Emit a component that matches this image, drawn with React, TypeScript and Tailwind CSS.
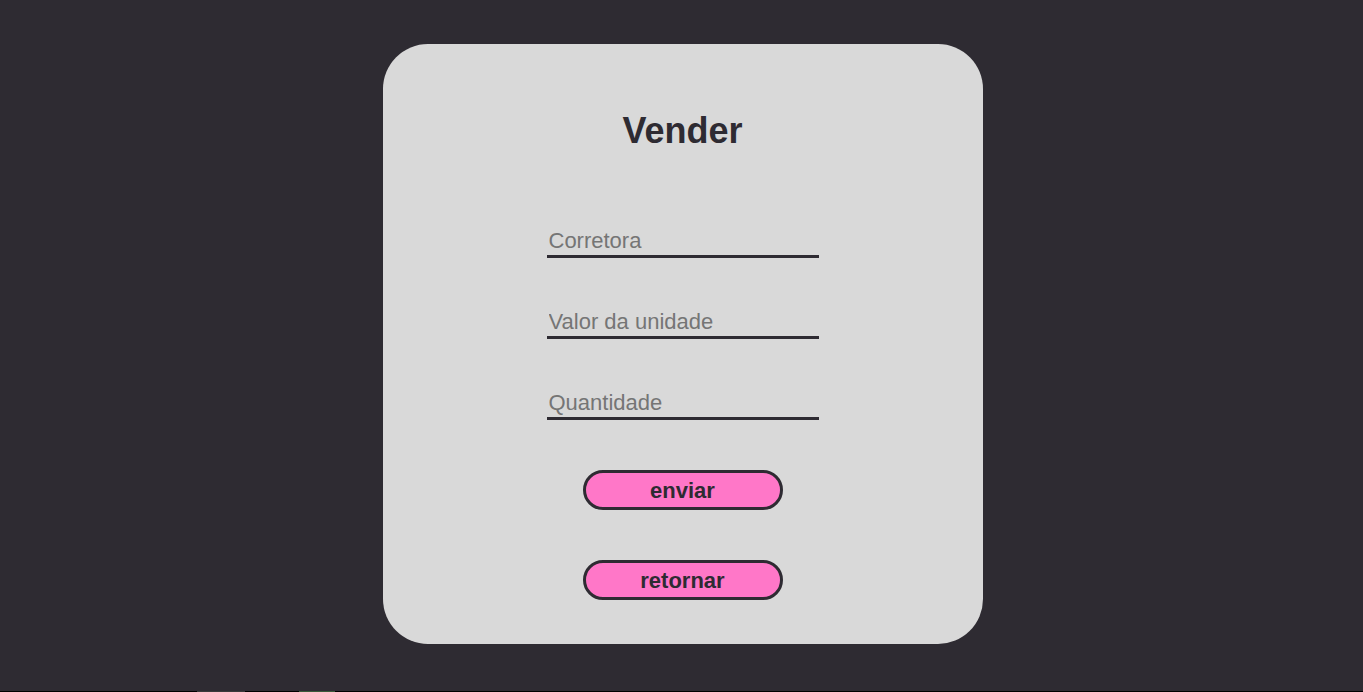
export default function App() {
  const fields = ["Corretora", "Valor da unidade", "Quantidade"];

  return (
    <div className="h-[692px] flex flex-col bg-[#2e2b32] font-['Liberation_Sans',Arial,sans-serif] text-[#2e2b32]">
      <main className="flex-1 flex justify-center pt-[44px] pl-[2px]">
        <form className="w-[600px] h-[600px] bg-[#d9d9d9] rounded-[45px] flex flex-col items-center pt-[66px]">
          <h1 className="text-[36px] leading-[42px] font-bold">Vender</h1>

          <div className="mt-[77px] flex flex-col gap-[52px]">
            {fields.map((f) => (
              <input
                key={f}
                placeholder={f}
                className="w-[272px] h-[29px] bg-transparent border-b-[3px] border-[#2e2b32] px-[2px] pb-[2px] text-[22px] leading-[24px] outline-none placeholder:text-[#757575]"
              />
            ))}
          </div>

          <div className="mt-[50px] flex flex-col gap-[50px]">
            <button type="button" className="w-[200px] h-[40px] rounded-full border-[3px] border-[#2e2b32] bg-[#ff77c8] text-[22px] font-bold">
              enviar
            </button>
            <button type="button" className="w-[200px] h-[40px] rounded-full border-[3px] border-[#2e2b32] bg-[#ff77c8] text-[22px] font-bold">
              retornar
            </button>
          </div>
        </form>
      </main>
      <div className="h-px bg-black flex">
        <div className="ml-[197px] w-[48px] bg-[#3a3a3a]" />
        <div className="ml-[54px] w-[36px] bg-[#3a5a3a]" />
      </div>
    </div>
  );
}
